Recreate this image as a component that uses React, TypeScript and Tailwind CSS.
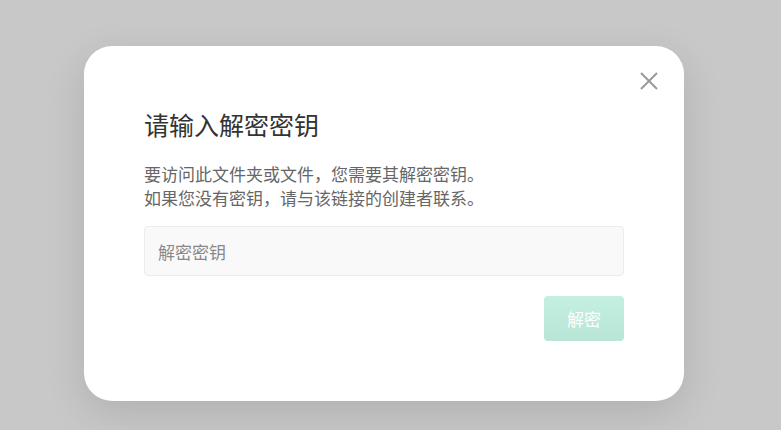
export default function App() {
  return (
    <div
      className="h-[430px] w-full bg-[#c8c8c8] pl-[84px] pt-[46px]"
      style={{ fontFamily: '"Noto Sans CJK SC", "Noto Sans", sans-serif' }}
    >
      <div className="relative w-[600px] rounded-[28px] bg-white px-[60px] pt-[60px] pb-[60px] shadow-[0_12px_40px_rgba(0,0,0,0.12)]">
        {/* close */}
        <button className="absolute right-[25px] top-[25px] flex h-[20px] w-[20px] items-center justify-center text-[#999]">
          <svg width="18" height="18" viewBox="0 0 18 18" fill="none" stroke="currentColor" strokeWidth="2">
            <path d="M1 1L17 17M17 1L1 17" />
          </svg>
        </button>

        <h2 className="text-[25px] leading-[36px] text-[#333]">请输入解密密钥</h2>
        <p className="mt-[20px] text-[17px] leading-[24px] text-[#666]">
          要访问此文件夹或文件，您需要其解密密钥。
          <br />
          如果您没有密钥，请与该链接的创建者联系。
        </p>

        <input
          type="text"
          placeholder="解密密钥"
          className="mt-[16px] h-[50px] w-full rounded-[4px] border border-[#ececec] bg-[#f9f9f9] px-[13px] text-[17px] text-[#333] outline-none placeholder:text-[#888]"
        />

        <div className="mt-[20px] flex justify-end">
          <button
            disabled
            className="h-[45px] w-[80px] rounded-[4px] bg-gradient-to-b from-[#c4f0e2] to-[#b8e5d5] text-[17px] text-white"
          >
            解密
          </button>
        </div>
      </div>
    </div>
  );
}
